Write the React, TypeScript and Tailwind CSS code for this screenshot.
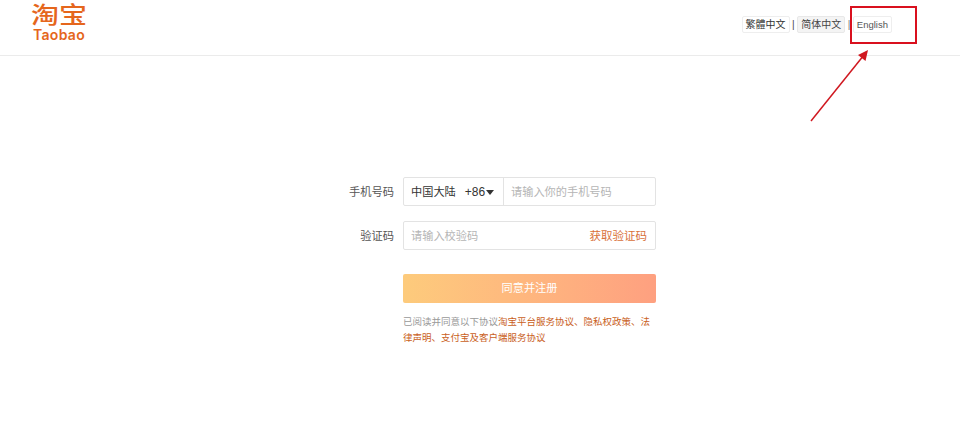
const cjk = "font-['Liberation_Sans','Noto_Sans_CJK_SC',sans-serif]";

export default function App() {
  return (
    <div className={`relative h-[422px] w-[960px] overflow-hidden bg-white ${cjk}`}>
      <header className="flex h-[56px] items-start justify-between border-b border-[#ebebeb] pl-[30px] pr-[68px]">
        <div className="flex w-[58px] flex-col items-center pt-[4px] text-[#e5661c]">
          <span className="origin-center scale-y-[0.8] text-[28px] font-medium leading-[24px] whitespace-nowrap">淘宝</span>
          <span className="font-['Inter',sans-serif] text-[14px] font-semibold leading-[14px] tracking-[0.3px]">Taobao</span>
        </div>
        <div className="flex items-center pt-[16px] text-[10px] leading-[15px] text-[#333]">
          <span className="rounded-[2px] border border-[#eeeeee] bg-white px-[3px] py-0 text-[#333]">繁體中文</span>
          <span className="mx-[2.5px] text-[10px] text-[#444]">|</span>
          <span className="rounded-[2px] border border-[#e8e8e8] bg-[#f4f4f4] px-[3px] py-0 text-[#444]">简体中文</span>
          <span className="mx-[2.5px] text-[10px] text-[#777]">|</span>
          <span className="rounded-[2px] border border-[#eeeeee] bg-white px-[3px] py-0 text-[9.5px] text-[#555]">English</span>
        </div>
      </header>

      <main className="flex flex-col pl-[340px] pt-[121px]">
        <div className="flex items-center">
          <label className="w-[54px] pt-[1px] text-right text-[11.25px] text-[#555]">手机号码</label>
          <div className="ml-[9px] flex h-[29px] w-[253px] items-center rounded-[2px] border border-[#e3e3e3] bg-white pt-[2px] text-[11.2px]">
            <div className="-mt-[2px] flex h-[27px] w-[100px] items-center border-r border-[#e3e3e3] pl-[7px] pt-[1px] text-[#333]">
              <span>中国大陆</span>
              <span className="ml-[9px] text-[12px]">+86</span>
              <span className="ml-[1px] mt-[1px] h-0 w-0 border-x-[4.5px] border-t-[5px] border-x-transparent border-t-[#333]" />
            </div>
            <span className="pl-[7px] text-[#b5b5b5]">请输入你的手机号码</span>
          </div>
        </div>

        <div className="mt-[15px] flex items-center">
          <label className="w-[54px] pt-[1px] text-right text-[11.25px] text-[#555]">验证码</label>
          <div className="ml-[9px] flex h-[29px] w-[253px] items-center justify-between rounded-[2px] border border-[#e3e3e3] bg-white pl-[7px] pr-[8px] pt-[2px] text-[11.2px]">
            <span className="text-[#b5b5b5]">请输入校验码</span>
            <span className="text-[11.5px] text-[#d9713a]">获取验证码</span>
          </div>
        </div>

        <button className="ml-[63px] mt-[24px] h-[29px] w-[253px] rounded-[2px] bg-gradient-to-r from-[#fdcb7c] to-[#fea080] text-[11.2px] text-white">
          同意并注册
        </button>

        <p className="ml-[63px] mt-[11px] w-[253px] text-[9.5px] leading-[16px] text-[#999]">
          已阅读并同意以下协议<span className="text-[#c9601c]">淘宝平台服务协议、隐私权政策、法律声明、支付宝及客户端服务协议</span>
        </p>
      </main>

      <div className="absolute left-[850px] top-[6px] h-[38px] w-[67px] border-2 border-[#d9101e]" />
      <svg className="absolute left-[800px] top-[40px]" width="80" height="90" viewBox="0 0 80 90" fill="none">
        <line x1="11" y1="81" x2="64" y2="15" stroke="#d01820" strokeWidth="1.5" />
        <polygon points="68,10 65.5,21 58,15" fill="#d01820" />
      </svg>
    </div>
  );
}
